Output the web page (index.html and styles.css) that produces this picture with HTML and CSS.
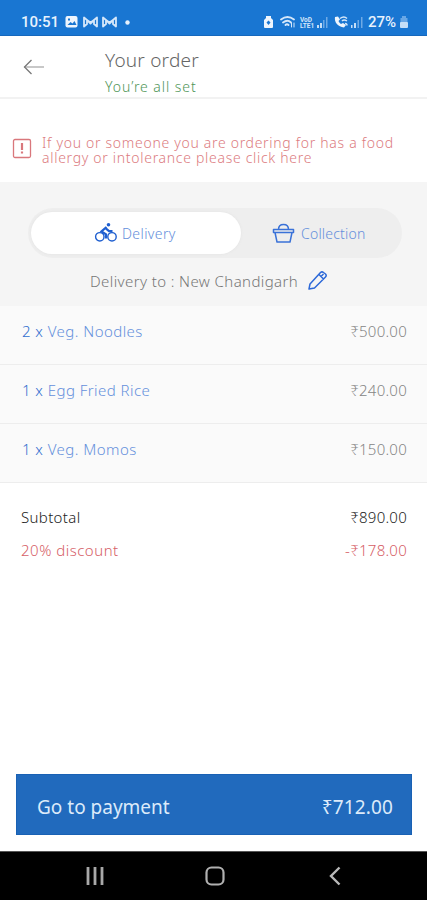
FILE: index.html
```html
<!DOCTYPE html>
<html lang="en">
<head>
<meta charset="utf-8">
<meta name="viewport" content="width=device-width, initial-scale=1">
<title>Your order</title>
<link rel="stylesheet" href="styles.css">
</head>
<body>
<div class="screen">
  <div class="status">
    <span class="clock">10:51</span>
    <svg class="notices" width="68" height="14" viewBox="0 0 68 14" fill="none">
      <rect x="0.5" y="1" width="12" height="11.5" rx="2" fill="#eef5fd"/>
      <path d="M2.500 10l3-3 2 1.500 2-2.500 2 4z" fill="#1976d2"/>
      <rect x="3" y="3.500" width="2" height="2" fill="#1976d2"/>
      <g stroke="#d5e7fa" stroke-width="1.800" stroke-linejoin="round">
        <path d="M19 2.500v9l3-2.500v-4l3.500 2.500 3.500-2.500v4l3 2.500v-9l-3 2.500-3.500 3.500-3.500-3.500z"/>
        <path d="M38 2.500v9l3-2.500v-4l3.500 2.500 3.500-2.500v4l3 2.500v-9l-3 2.500-3.500 3.500-3.500-3.500z"/>
      </g>
      <circle cx="62.500" cy="7.500" r="2.200" fill="#e6f1fd"/>
    </svg>
    <svg class="signals" width="101" height="16" viewBox="0 0 101 16" fill="none">
      <path d="M3 2h5v2l2 2v7q0 1-1 1H2q-1 0-1-1V6l2-2z" fill="#eef5fd"/>
      <path d="M3.500 8.500l2-2 2 2-2 2.500z" fill="#1976d2"/>
      <g stroke="#d5e7fa" stroke-width="1.800" stroke-linecap="round">
        <path d="M18 5.500q6.500-5 13 0M20 8.500q4.500-3.500 8 0M22.500 11q1.500-1.500 3 0"/>
        <path d="M28.500 9v4M31 9v4" stroke-width="1"/>
      </g>
      <g fill="#c5def7">
        <path d="M54 11h2v3h-2zM57 9h2v5h-2z"/>
        <path d="M60 6h1.500v8H60zM63 3h1.500v11H63z" opacity=".5"/>
        <path d="M88 11h1.500v3H88zM91 9h2v5h-2z"/>
        <path d="M94.500 6h1.500v8h-1.500zM98 3h1.500v11H98z" opacity=".5"/>
      </g>
      <text class="volte" x="37" y="8">VoD</text>
      <text class="volte" x="37" y="14">LTE1</text>
      <path d="M72 3c-1 5 3 10 9 10.500l2-2.500-3-2-2 1c-1.500-1-2-2-2.500-3l1.500-1.500-2-3z" fill="#eef5fd"/>
      <path d="M77 4.500q4-3 7 0M79 7q2-2 5 0M82 9.500q2 0 2 2" stroke="#d5e7fa" stroke-width="1.500"/>
    </svg>
    <span class="charge">27%</span>
    <svg class="battery" width="10" height="15" viewBox="0 0 10 15">
      <path d="M3 2h4v2h1.500v5h-7V4H3z" fill="#69a7e6"/>
      <rect x="1" y="8" width="8" height="6" rx="1" fill="#c5def7"/>
    </svg>
  </div>

  <header class="header">
    <svg class="back" width="22" height="18" viewBox="0 0 22 18" fill="none" stroke-width="1.300">
      <path d="M1 9h20" stroke="#aaa"/><path d="M8.500 2L1.500 9l7 7" stroke="#777"/>
    </svg>
    <div class="titles">
      <h1>Your order</h1>
      <p>You’re all set</p>
    </div>
  </header>

  <a class="alert">
    <svg width="20" height="21" viewBox="0 0 20 21" fill="none" stroke="#d9777c">
      <rect x="1.500" y="1.500" width="17" height="18" rx="1.500" stroke-width="1.300"/>
      <path d="M10 5v7M10 13.500v2" stroke-width="2.200"/>
    </svg>
    <div class="warning">
      <p>If you or someone you are ordering for has a food</p>
      <p>allergy or intolerance please click here</p>
    </div>
  </a>

  <section class="method">
    <div class="toggle">
      <div class="option selected">
        <svg width="24" height="22" viewBox="0 0 24 22" fill="none" stroke="#1f5fd0" stroke-width="1.400">
          <circle cx="5.800" cy="14.800" r="4.200"/><circle cx="18" cy="14.800" r="4.200"/>
          <circle cx="14.500" cy="2.700" r="1.800" fill="#1f5fd0" stroke="none"/>
          <path d="M12.500 5L7.500 9.300l4.500 3v4.200M11.500 6.200l3.500 3h3.500" stroke-width="2.200"/>
        </svg>
        <span>Delivery</span>
      </div>
      <div class="option collect">
        <svg width="23" height="21" viewBox="0 0 23 21" fill="none" stroke="#3a72d8" stroke-width="1.500" stroke-linejoin="round">
          <path d="M1.500 6.500h20v3H1.500zM3 9.500l2 9.500h13l2-9.500M6.500 6.500q0-5 5-5t5 5"/>
        </svg>
        <span>Collection</span>
      </div>
    </div>
    <div class="place">
      <span>Delivery to : New Chandigarh</span>
      <svg width="22" height="22" viewBox="0 0 22 22" fill="none" stroke="#2d69d8" stroke-width="1.500" stroke-linejoin="round">
        <path d="M2 19l1-5L13.500 2.500q1.500-1.300 3 0L18.500 4q1.500 1.500 0 3L7.500 18zM12 4.500l4.500 4.500M14 6.500l2.500-2.500"/>
      </svg>
    </div>
  </section>

  <ul class="items">
    <li><span><b>2 x</b> Veg. Noodles</span><span class="price">₹500.00</span></li>
    <li><span><b>1 x</b> Egg Fried Rice</span><span class="price">₹240.00</span></li>
    <li><span><b>1 x</b> Veg. Momos</span><span class="price">₹150.00</span></li>
  </ul>

  <div class="totals">
    <div class="row subtotal"><span>Subtotal</span><span class="price">₹890.00</span></div>
    <div class="row discount"><span>20% discount</span><span class="price">-₹178.00</span></div>
  </div>

  <button class="pay"><span>Go to payment</span><span class="amount">₹712.00</span></button>

  <nav class="nav">
    <svg width="20" height="20" viewBox="0 0 20 20" stroke="#a8a8a8" stroke-width="2.800"><path d="M3 1v18M10 1v18M17 1v18"/></svg>
    <svg width="20" height="20" viewBox="0 0 20 20" fill="none" stroke="#b0b0b0" stroke-width="2.200"><rect x="1.500" y="1.500" width="17" height="17" rx="5"/></svg>
    <svg width="20" height="20" viewBox="0 0 20 20" fill="none" stroke="#b8b8b8" stroke-width="2.400"><path d="M14.500 1.500L6 10l8.500 8.500"/></svg>
  </nav>
</div>
</body>
</html>
```
FILE: styles.css
```css
* { box-sizing: border-box; }
body { margin: 0; background: #fff; font-family: "Noto Sans", sans-serif; font-weight: 300; }
h1, p, ul { margin: 0; padding: 0; font-weight: inherit; }
b { font-weight: 300; color: #326fcf; }
svg { display: block; flex: none; }
.screen { width: 427px; height: 900px; display: flex; flex-direction: column; overflow: hidden; white-space: nowrap; }

.status { height: 36px; flex: none; display: flex; align-items: center; padding: 8px 18px 0 21px; background: #1976d2; border-bottom: 1px solid #1668bd; color: #e8f2fd; font-family: Roboto, sans-serif; font-size: 15px; font-weight: 500; }
.clock { width: 44px; }
.signals { margin-left: auto; }
.charge { width: 31px; font-size: 15px; margin-left: 4px; }
.volte { font: 700 6.5px Roboto, sans-serif; fill: #d5e7fa; }

.header { height: 63px; flex: none; display: flex; padding: 12px 0 0 23px; border-bottom: 2px solid #f2f2f2; }
.back { margin-top: 10px; }
.titles { margin-left: 60px; }
h1 { font-size: 19px; line-height: 24px; color: #666; letter-spacing: .2px; }
.titles p { font-size: 14px; line-height: 18px; margin-top: 6px; color: #4e9557; letter-spacing: .95px; }

.alert { height: 83px; flex: none; display: flex; gap: 10px; padding: 36px 0 0 12px; color: #dc7b80; }
.alert svg { margin-top: 3px; }
.warning p { font-size: 14px; line-height: 15px; letter-spacing: .7px; }

.method { height: 124px; flex: none; background: #f5f5f5; padding: 26px 25px 0 28px; }
.toggle { height: 50px; border-radius: 25px; background: #eee; display: flex; align-items: center; padding: 0 3px; }
.option { display: flex; align-items: center; gap: 4px; font-size: 14px; line-height: 20px; color: #6590dc; letter-spacing: .4px; }
.option span { padding-top: 2px; }
.selected { width: 210px; height: 42px; border-radius: 21px; background: #fff; padding-left: 63px; box-shadow: 0 0 3px #e2e2e2; }
.collect { padding-left: 31px; gap: 6px; letter-spacing: .2px; }
.place { display: flex; align-items: center; gap: 9px; padding: 12px 0 0 62px; font-size: 15px; line-height: 22px; color: #777; letter-spacing: .4px; }

.items { list-style: none; background: #fafafa; flex: none; font-size: 15px; color: #6590dc; letter-spacing: .45px; }
.items li { height: 59px; display: flex; justify-content: space-between; padding: 14px 20px 0 22px; line-height: 22px; border-bottom: 1px solid #ededed; }
.price { letter-spacing: .25px; }
.items .price { color: #858585; }
.totals { padding: 23px 20px 0 21px; font-size: 15px; letter-spacing: .35px; }
.row { display: flex; justify-content: space-between; height: 33px; line-height: 22px; }
.subtotal { color: #222; }
.discount { color: #d66067; letter-spacing: .5px; }

.pay { height: 61px; flex: none; margin: auto 15px 16px 16px; border: 1px solid #1961b4; background: #216abd; color: #dceafa; padding: 5px 18px 0 20px; display: flex; justify-content: space-between; align-items: center; font: 400 19px "Noto Sans", sans-serif; }
.amount { letter-spacing: .15px; }
.nav { height: 49px; flex: none; background: #000; border-top: 1px solid #555; display: flex; align-items: center; justify-content: space-between; padding: 0 82px 0 85px; }
```
